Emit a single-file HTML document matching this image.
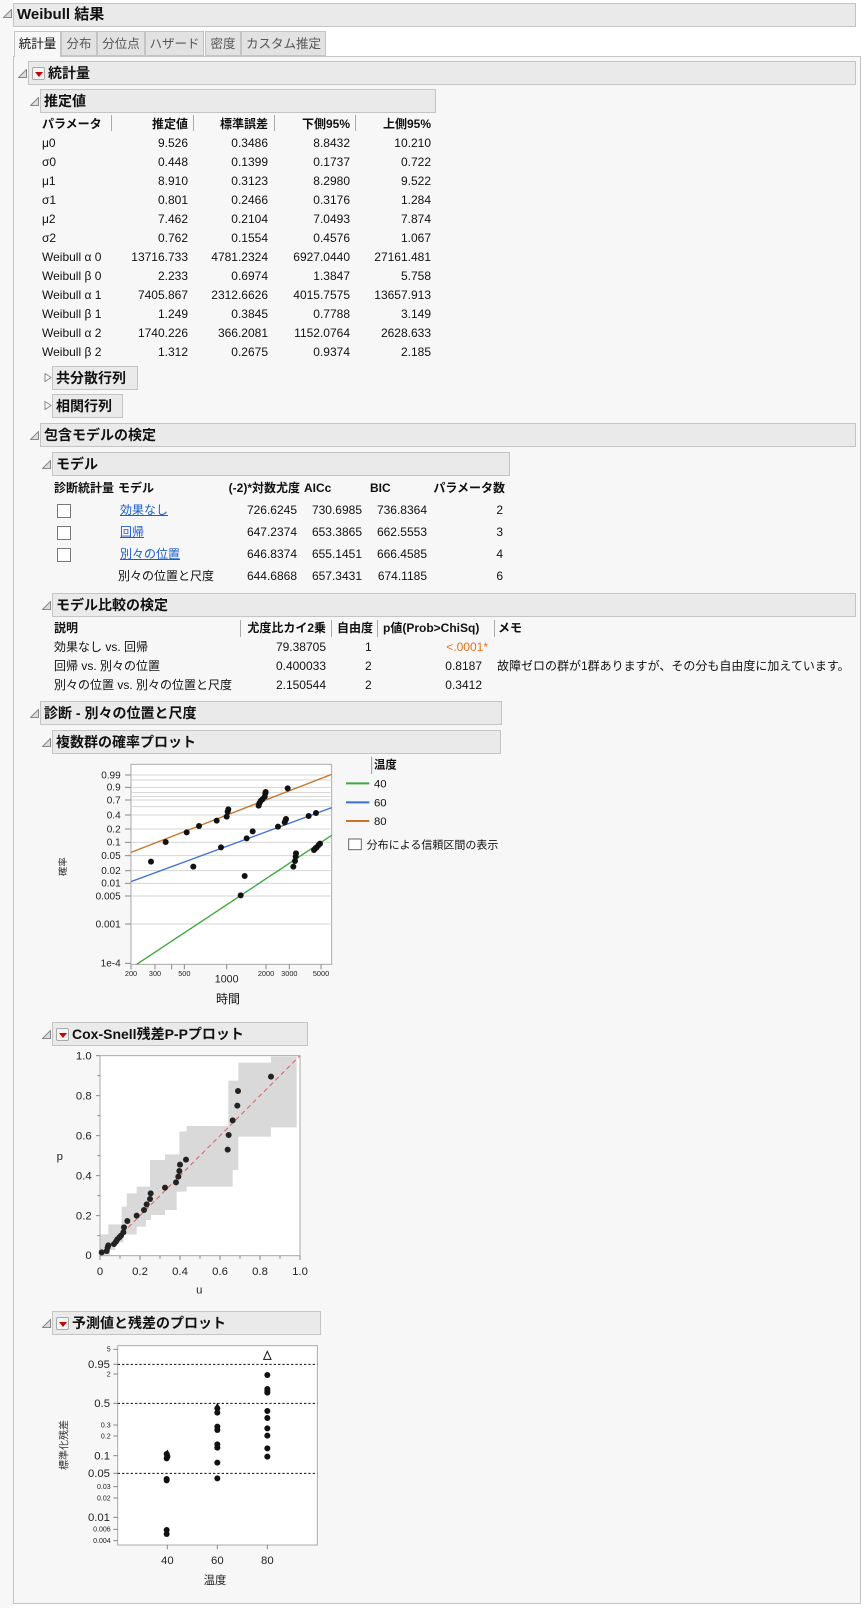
<!DOCTYPE html>
<html><head><meta charset="utf-8">
<style>
*{margin:0;padding:0;box-sizing:border-box}
body{width:866px;height:1608px;background:#fff;font-family:"Liberation Sans","Noto Sans CJK JP",sans-serif;font-size:12px;color:#111;position:relative;overflow:hidden}
.a{position:absolute;white-space:nowrap}
.h{position:absolute;background:#eaeaea;border:1px solid #c4c4c4;font-weight:bold;font-size:14px;line-height:22px;padding-left:3px;height:24px}
.r{position:absolute;white-space:nowrap;text-align:right;width:120px}
.tri{position:absolute;width:9px;height:9px}
.dd{display:inline-block;width:13px;height:13px;border:1px solid #aaa;background:#f4f4f4;border-radius:2px;vertical-align:-2px;margin-right:3px;position:relative}
.dd:after{content:"";position:absolute;left:2px;top:4px;border-left:4px solid transparent;border-right:4px solid transparent;border-top:5px solid #c00}
.tab{position:absolute;top:31px;height:25px;border:1px solid #c4c4c4;background:#e2e2e2;color:#555;font-size:12.5px;line-height:24px;text-align:center}
.sep{position:absolute;width:1px;background:#aaa}
.cb{position:absolute;width:14px;height:14px;border:1px solid #777;background:#fff}
a{color:#1a5fcc;text-decoration:underline}
</style></head><body>
<div class="a" style="left:13px;top:56px;width:848px;height:1548px;background:#f7f7f7;border:1px solid #c4c4c4"></div>
<div class="a" style="left:0;top:0;width:13px;height:1608px;background:#f7f7f7"></div>
<svg class="tri" style="left:3px;top:9px" viewBox="0 0 9 9"><polygon points="0.5,8.5 8.5,0.5 8.5,8.5" fill="#ddd" stroke="#888"/></svg>
<div class="h" style="left:13px;top:3px;width:843px;height:24px;font-size:15px">Weibull 結果</div>

<div class="tab" style="left:14px;width:47px;background:#f7f7f7;color:#111;border-bottom:none;height:26px">統計量</div>
<div class="tab" style="left:61px;width:36px">分布</div>
<div class="tab" style="left:97px;width:48px">分位点</div>
<div class="tab" style="left:145px;width:59px">ハザード</div>
<div class="tab" style="left:205px;width:36px">密度</div>
<div class="tab" style="left:241px;width:85px">カスタム推定</div>

<svg class="tri" style="left:18px;top:69px" viewBox="0 0 9 9"><polygon points="0.5,8.5 8.5,0.5 8.5,8.5" fill="#ddd" stroke="#888"/></svg>
<div class="h" style="left:28px;top:61px;width:828px"><span class="dd"></span>統計量</div>
<svg class="tri" style="left:30px;top:97px" viewBox="0 0 9 9"><polygon points="0.5,8.5 8.5,0.5 8.5,8.5" fill="#ddd" stroke="#888"/></svg>
<div class="h" style="left:40px;top:89px;width:396px">推定値</div>

<div style="position:absolute;left:0;top:115px;line-height:19px">
<div class="a" style="left:42px;font-weight:bold">パラメータ</div>
<div class="r" style="left:68px;font-weight:bold">推定値</div>
<div class="r" style="left:148px;font-weight:bold">標準誤差</div>
<div class="r" style="left:230px;font-weight:bold">下側95%</div>
<div class="r" style="left:311px;font-weight:bold">上側95%</div>
</div>
<div class="sep" style="left:111px;top:115px;height:16px"></div>
<div class="sep" style="left:193px;top:115px;height:16px"></div>
<div class="sep" style="left:274px;top:115px;height:16px"></div>
<div class="sep" style="left:355px;top:115px;height:16px"></div>

<div style="position:absolute;left:0;top:134px;line-height:19px">
<div class="a" style="left:42px;top:0">μ0</div><div class="r" style="left:68px;top:0">9.526</div><div class="r" style="left:148px;top:0">0.3486</div><div class="r" style="left:230px;top:0">8.8432</div><div class="r" style="left:311px;top:0">10.210</div>
<div class="a" style="left:42px;top:19px">σ0</div><div class="r" style="left:68px;top:19px">0.448</div><div class="r" style="left:148px;top:19px">0.1399</div><div class="r" style="left:230px;top:19px">0.1737</div><div class="r" style="left:311px;top:19px">0.722</div>
<div class="a" style="left:42px;top:38px">μ1</div><div class="r" style="left:68px;top:38px">8.910</div><div class="r" style="left:148px;top:38px">0.3123</div><div class="r" style="left:230px;top:38px">8.2980</div><div class="r" style="left:311px;top:38px">9.522</div>
<div class="a" style="left:42px;top:57px">σ1</div><div class="r" style="left:68px;top:57px">0.801</div><div class="r" style="left:148px;top:57px">0.2466</div><div class="r" style="left:230px;top:57px">0.3176</div><div class="r" style="left:311px;top:57px">1.284</div>
<div class="a" style="left:42px;top:76px">μ2</div><div class="r" style="left:68px;top:76px">7.462</div><div class="r" style="left:148px;top:76px">0.2104</div><div class="r" style="left:230px;top:76px">7.0493</div><div class="r" style="left:311px;top:76px">7.874</div>
<div class="a" style="left:42px;top:95px">σ2</div><div class="r" style="left:68px;top:95px">0.762</div><div class="r" style="left:148px;top:95px">0.1554</div><div class="r" style="left:230px;top:95px">0.4576</div><div class="r" style="left:311px;top:95px">1.067</div>
<div class="a" style="left:42px;top:114px">Weibull α 0</div><div class="r" style="left:68px;top:114px">13716.733</div><div class="r" style="left:148px;top:114px">4781.2324</div><div class="r" style="left:230px;top:114px">6927.0440</div><div class="r" style="left:311px;top:114px">27161.481</div>
<div class="a" style="left:42px;top:133px">Weibull β 0</div><div class="r" style="left:68px;top:133px">2.233</div><div class="r" style="left:148px;top:133px">0.6974</div><div class="r" style="left:230px;top:133px">1.3847</div><div class="r" style="left:311px;top:133px">5.758</div>
<div class="a" style="left:42px;top:152px">Weibull α 1</div><div class="r" style="left:68px;top:152px">7405.867</div><div class="r" style="left:148px;top:152px">2312.6626</div><div class="r" style="left:230px;top:152px">4015.7575</div><div class="r" style="left:311px;top:152px">13657.913</div>
<div class="a" style="left:42px;top:171px">Weibull β 1</div><div class="r" style="left:68px;top:171px">1.249</div><div class="r" style="left:148px;top:171px">0.3845</div><div class="r" style="left:230px;top:171px">0.7788</div><div class="r" style="left:311px;top:171px">3.149</div>
<div class="a" style="left:42px;top:190px">Weibull α 2</div><div class="r" style="left:68px;top:190px">1740.226</div><div class="r" style="left:148px;top:190px">366.2081</div><div class="r" style="left:230px;top:190px">1152.0764</div><div class="r" style="left:311px;top:190px">2628.633</div>
<div class="a" style="left:42px;top:209px">Weibull β 2</div><div class="r" style="left:68px;top:209px">1.312</div><div class="r" style="left:148px;top:209px">0.2675</div><div class="r" style="left:230px;top:209px">0.9374</div><div class="r" style="left:311px;top:209px">2.185</div>
</div>

<svg class="tri" style="left:44px;top:373px" viewBox="0 0 9 9"><polygon points="1,0.5 7,4.5 1,8.5" fill="#fff" stroke="#888"/></svg>
<div class="h" style="left:52px;top:366px;width:86px">共分散行列</div>
<svg class="tri" style="left:44px;top:401px" viewBox="0 0 9 9"><polygon points="1,0.5 7,4.5 1,8.5" fill="#fff" stroke="#888"/></svg>
<div class="h" style="left:52px;top:394px;width:71px">相関行列</div>

<svg class="tri" style="left:30px;top:431px" viewBox="0 0 9 9"><polygon points="0.5,8.5 8.5,0.5 8.5,8.5" fill="#ddd" stroke="#888"/></svg>
<div class="h" style="left:40px;top:423px;width:816px">包含モデルの検定</div>
<svg class="tri" style="left:42px;top:460px" viewBox="0 0 9 9"><polygon points="0.5,8.5 8.5,0.5 8.5,8.5" fill="#ddd" stroke="#888"/></svg>
<div class="h" style="left:52px;top:452px;width:458px">モデル</div>

<div style="position:absolute;left:0;top:479px;line-height:19px;font-weight:bold">
<div class="a" style="left:54px">診断統計量</div>
<div class="a" style="left:118px">モデル</div>
<div class="r" style="left:180px">(-2)*対数尤度</div>
<div class="a" style="left:304px">AICc</div>
<div class="a" style="left:370px">BIC</div>
<div class="r" style="left:385px">パラメータ数</div>
</div>
<div style="position:absolute;left:0;top:501px;line-height:19px">
<div class="cb" style="left:57px;top:3px"></div><div class="a" style="left:120px;top:0"><a>効果なし</a></div><div class="r" style="left:177px;top:0">726.6245</div><div class="r" style="left:242px;top:0">730.6985</div><div class="r" style="left:307px;top:0">736.8364</div><div class="r" style="left:383px;top:0">2</div>
<div class="cb" style="left:57px;top:25px"></div><div class="a" style="left:120px;top:22px"><a>回帰</a></div><div class="r" style="left:177px;top:22px">647.2374</div><div class="r" style="left:242px;top:22px">653.3865</div><div class="r" style="left:307px;top:22px">662.5553</div><div class="r" style="left:383px;top:22px">3</div>
<div class="cb" style="left:57px;top:47px"></div><div class="a" style="left:120px;top:44px"><a>別々の位置</a></div><div class="r" style="left:177px;top:44px">646.8374</div><div class="r" style="left:242px;top:44px">655.1451</div><div class="r" style="left:307px;top:44px">666.4585</div><div class="r" style="left:383px;top:44px">4</div>
<div class="a" style="left:118px;top:66px">別々の位置と尺度</div><div class="r" style="left:177px;top:66px">644.6868</div><div class="r" style="left:242px;top:66px">657.3431</div><div class="r" style="left:307px;top:66px">674.1185</div><div class="r" style="left:383px;top:66px">6</div>
</div>

<svg class="tri" style="left:42px;top:601px" viewBox="0 0 9 9"><polygon points="0.5,8.5 8.5,0.5 8.5,8.5" fill="#ddd" stroke="#888"/></svg>
<div class="h" style="left:52px;top:593px;width:804px">モデル比較の検定</div>
<div style="position:absolute;left:0;top:619px;line-height:19px;font-weight:bold">
<div class="a" style="left:54px">説明</div>
<div class="r" style="left:206px">尤度比カイ2乗</div>
<div class="a" style="left:337px">自由度</div>
<div class="a" style="left:383px">p値(Prob&gt;ChiSq)</div>
<div class="a" style="left:498px">メモ</div>
</div>
<div class="sep" style="left:240px;top:620px;height:17px"></div>
<div class="sep" style="left:331px;top:620px;height:17px"></div>
<div class="sep" style="left:377px;top:620px;height:17px"></div>
<div class="sep" style="left:494px;top:620px;height:17px"></div>
<div style="position:absolute;left:0;top:638px;line-height:19px">
<div class="a" style="left:54px;top:0">効果なし vs. 回帰</div><div class="r" style="left:206px;top:0">79.38705</div><div class="a" style="left:365px;top:0">1</div><div class="r" style="left:368px;top:0;color:#e8711e">&lt;.0001*</div>
<div class="a" style="left:54px;top:19px">回帰 vs. 別々の位置</div><div class="r" style="left:206px;top:19px">0.400033</div><div class="a" style="left:365px;top:19px">2</div><div class="r" style="left:362px;top:19px">0.8187</div><div class="a" style="left:497px;top:19px">故障ゼロの群が1群ありますが、その分も自由度に加えています。</div>
<div class="a" style="left:54px;top:38px">別々の位置 vs. 別々の位置と尺度</div><div class="r" style="left:206px;top:38px">2.150544</div><div class="a" style="left:365px;top:38px">2</div><div class="r" style="left:362px;top:38px">0.3412</div>
</div>

<svg class="tri" style="left:30px;top:709px" viewBox="0 0 9 9"><polygon points="0.5,8.5 8.5,0.5 8.5,8.5" fill="#ddd" stroke="#888"/></svg>
<div class="h" style="left:40px;top:701px;width:462px">診断 - 別々の位置と尺度</div>
<svg class="tri" style="left:42px;top:738px" viewBox="0 0 9 9"><polygon points="0.5,8.5 8.5,0.5 8.5,8.5" fill="#ddd" stroke="#888"/></svg>
<div class="h" style="left:52px;top:730px;width:449px">複数群の確率プロット</div>

<svg style="position:absolute;left:30px;top:730px" width="470" height="260" viewBox="0 0 1410 780" font-family="Liberation Sans,Noto Sans CJK JP,sans-serif">
<rect x="303" y="103" width="602" height="600" fill="#fff" stroke="#aaa" stroke-width="3"/>
<g stroke="#d4d4d4" stroke-width="3">
<line x1="303" x2="905" y1="135" y2="135"/><line x1="303" x2="905" y1="150" y2="150"/><line x1="303" x2="905" y1="172" y2="172"/><line x1="303" x2="905" y1="188" y2="188"/><line x1="303" x2="905" y1="200" y2="200"/><line x1="303" x2="905" y1="210" y2="210"/><line x1="303" x2="905" y1="230" y2="230"/><line x1="303" x2="905" y1="255" y2="255"/><line x1="303" x2="905" y1="297" y2="297"/><line x1="303" x2="905" y1="337" y2="337"/><line x1="303" x2="905" y1="377" y2="377"/><line x1="303" x2="905" y1="422" y2="422"/><line x1="303" x2="905" y1="460" y2="460"/><line x1="303" x2="905" y1="498" y2="498"/><line x1="303" x2="905" y1="582" y2="582"/>
</g>
<g stroke="#888" stroke-width="3">
<line x1="285" x2="303" y1="135" y2="135"/><line x1="285" x2="303" y1="172" y2="172"/><line x1="285" x2="303" y1="210" y2="210"/><line x1="285" x2="303" y1="255" y2="255"/><line x1="285" x2="303" y1="297" y2="297"/><line x1="285" x2="303" y1="337" y2="337"/><line x1="285" x2="303" y1="377" y2="377"/><line x1="285" x2="303" y1="422" y2="422"/><line x1="285" x2="303" y1="460" y2="460"/><line x1="285" x2="303" y1="498" y2="498"/><line x1="285" x2="303" y1="582" y2="582"/><line x1="285" x2="303" y1="700" y2="700"/>
<line x1="303" x2="303" y1="703" y2="718"/><line x1="375" x2="375" y1="703" y2="718"/><line x1="425" x2="425" y1="703" y2="718"/><line x1="463" x2="463" y1="703" y2="718"/><line x1="590" x2="590" y1="703" y2="718"/><line x1="708" x2="708" y1="703" y2="718"/><line x1="778" x2="778" y1="703" y2="718"/><line x1="873" x2="873" y1="703" y2="718"/>
</g>
<g font-size="30" text-anchor="end" fill="#222">
<text x="272" y="145">0.99</text><text x="272" y="182">0.9</text><text x="272" y="220">0.7</text><text x="272" y="265">0.4</text><text x="272" y="307">0.2</text><text x="272" y="347">0.1</text><text x="272" y="387">0.05</text><text x="272" y="432">0.02</text><text x="272" y="470">0.01</text><text x="272" y="508">0.005</text><text x="272" y="592">0.001</text><text x="272" y="710">1e-4</text>
</g>
<g font-size="22" text-anchor="middle" fill="#222">
<text x="303" y="738">200</text><text x="375" y="738">300</text><text x="463" y="738">500</text><text x="708" y="738">2000</text><text x="778" y="738">3000</text><text x="873" y="738">5000</text>
</g>
<text x="590" y="758" font-size="32" text-anchor="middle" fill="#222">1000</text>
<text transform="translate(108,410) rotate(-90)" font-size="28" text-anchor="middle" fill="#333">確率</text>
<line x1="303" y1="367" x2="905" y2="133" stroke="#c8742a" stroke-width="4"/>
<line x1="303" y1="455" x2="905" y2="233" stroke="#3a6fd8" stroke-width="4"/>
<line x1="320" y1="703" x2="905" y2="316" stroke="#3aaa3a" stroke-width="4"/>
<g fill="#111">
<circle cx="363" cy="395" r="9"/><circle cx="407" cy="336" r="9"/><circle cx="470" cy="307" r="9"/><circle cx="507" cy="288" r="9"/><circle cx="560" cy="272" r="9"/><circle cx="590" cy="260" r="9"/><circle cx="593" cy="245" r="9"/><circle cx="595" cy="238" r="9"/><circle cx="686" cy="227" r="9"/><circle cx="688" cy="220" r="9"/><circle cx="692" cy="213" r="9"/><circle cx="697" cy="208" r="9"/><circle cx="704" cy="200" r="9"/><circle cx="706" cy="190" r="9"/><circle cx="707" cy="186" r="9"/><circle cx="773" cy="175" r="9"/>
<circle cx="490" cy="410" r="9"/><circle cx="573" cy="352" r="9"/><circle cx="650" cy="325" r="9"/><circle cx="668" cy="304" r="9"/><circle cx="744" cy="290" r="9"/><circle cx="764" cy="277" r="9"/><circle cx="767" cy="270" r="9"/><circle cx="768" cy="267" r="9"/><circle cx="836" cy="258" r="9"/><circle cx="858" cy="249" r="9"/>
<circle cx="644" cy="438" r="9"/><circle cx="632" cy="496" r="9"/><circle cx="790" cy="410" r="9"/><circle cx="795" cy="393" r="9"/><circle cx="797" cy="380" r="9"/><circle cx="798" cy="370" r="9"/><circle cx="852" cy="360" r="9"/><circle cx="856" cy="355" r="9"/><circle cx="860" cy="352" r="9"/><circle cx="866" cy="345" r="9"/><circle cx="870" cy="341" r="9"/>
</g>
<line x1="1025" y1="80" x2="1025" y2="132" stroke="#999" stroke-width="3"/>
<text x="1032" y="115" font-size="34" font-weight="bold" fill="#111">温度</text>
<line x1="948" x2="1018" y1="160" y2="160" stroke="#3aaa3a" stroke-width="6"/>
<line x1="948" x2="1018" y1="217" y2="217" stroke="#3a6fd8" stroke-width="6"/>
<line x1="948" x2="1018" y1="273" y2="273" stroke="#c8742a" stroke-width="6"/>
<g font-size="34" fill="#111"><text x="1032" y="172">40</text><text x="1032" y="229">60</text><text x="1032" y="285">80</text></g>
<rect x="956" y="327" width="38" height="32" fill="#fff" stroke="#666" stroke-width="3"/>
<text x="1010" y="355" font-size="33" fill="#111">分布による信頼区間の表示</text>
</svg>
<div class="a" style="left:216px;top:990px">時間</div>

<svg class="tri" style="left:42px;top:1030px" viewBox="0 0 9 9"><polygon points="0.5,8.5 8.5,0.5 8.5,8.5" fill="#ddd" stroke="#888"/></svg>
<div class="h" style="left:52px;top:1022px;width:256px"><span class="dd"></span>Cox-Snell残差P-Pプロット</div>

<svg style="position:absolute;left:40px;top:990px" width="270" height="320" viewBox="0 0 810 960" font-family="Liberation Sans,sans-serif">
<rect x="180" y="197" width="600" height="600" fill="#fff" stroke="#aaa" stroke-width="3"/>
<polygon fill="#d9d9d9" points="181,733 205,733 205,703 245,703 245,650 260,650 260,610 290,610 290,590 330,590 330,510 375,510 375,493 418,493 418,425 440,425 440,408 565,408 565,272 595,272 595,218 693,218 693,200 770,200 770,412 693,412 693,440 595,440 595,540 578,540 578,590 440,590 440,605 410,605 410,660 375,660 375,675 333,675 333,690 318,690 318,710 290,710 290,733 250,733 250,757 225,757 225,780 210,780 210,795 181,795"/>
<line x1="180" y1="797" x2="780" y2="197" stroke="#e85a5a" stroke-width="3" stroke-dasharray="14,10"/>
<g fill="#222">
<circle cx="185" cy="787" r="9"/><circle cx="200" cy="783" r="9"/><circle cx="203" cy="772" r="9"/><circle cx="205" cy="766" r="9"/><circle cx="222" cy="762" r="9"/><circle cx="228" cy="755" r="9"/><circle cx="232" cy="748" r="9"/><circle cx="238" cy="742" r="9"/><circle cx="243" cy="737" r="9"/><circle cx="250" cy="727" r="9"/><circle cx="252" cy="712" r="9"/><circle cx="262" cy="693" r="9"/><circle cx="290" cy="677" r="9"/><circle cx="312" cy="660" r="9"/><circle cx="320" cy="643" r="9"/><circle cx="330" cy="627" r="9"/><circle cx="332" cy="610" r="9"/><circle cx="375" cy="593" r="9"/><circle cx="408" cy="577" r="9"/><circle cx="415" cy="560" r="9"/><circle cx="418" cy="543" r="9"/><circle cx="420" cy="524" r="9"/><circle cx="438" cy="509" r="9"/><circle cx="563" cy="479" r="9"/><circle cx="566" cy="435" r="9"/><circle cx="578" cy="391" r="9"/><circle cx="592" cy="347" r="9"/><circle cx="594" cy="303" r="9"/><circle cx="693" cy="260" r="9"/>
</g>
<g stroke="#888" stroke-width="3">
<line x1="168" x2="180" y1="197" y2="197"/><line x1="172" x2="180" y1="257" y2="257"/><line x1="168" x2="180" y1="317" y2="317"/><line x1="172" x2="180" y1="377" y2="377"/><line x1="168" x2="180" y1="437" y2="437"/><line x1="172" x2="180" y1="497" y2="497"/><line x1="168" x2="180" y1="557" y2="557"/><line x1="172" x2="180" y1="617" y2="617"/><line x1="168" x2="180" y1="677" y2="677"/><line x1="172" x2="180" y1="737" y2="737"/>
<line x1="180" x2="180" y1="797" y2="810"/><line x1="240" x2="240" y1="797" y2="806"/><line x1="300" x2="300" y1="797" y2="810"/><line x1="360" x2="360" y1="797" y2="806"/><line x1="420" x2="420" y1="797" y2="810"/><line x1="480" x2="480" y1="797" y2="806"/><line x1="540" x2="540" y1="797" y2="810"/><line x1="600" x2="600" y1="797" y2="806"/><line x1="660" x2="660" y1="797" y2="810"/><line x1="720" x2="720" y1="797" y2="806"/><line x1="780" x2="780" y1="797" y2="810"/>
</g>
<g font-size="34" text-anchor="end" fill="#222">
<text x="155" y="209">1.0</text><text x="155" y="329">0.8</text><text x="155" y="449">0.6</text><text x="155" y="569">0.4</text><text x="155" y="689">0.2</text><text x="155" y="807">0</text>
</g>
<g font-size="34" text-anchor="middle" fill="#222">
<text x="180" y="855">0</text><text x="300" y="855">0.2</text><text x="420" y="855">0.4</text><text x="540" y="855">0.6</text><text x="660" y="855">0.8</text><text x="780" y="855">1.0</text>
<text x="478" y="910">u</text>
</g>
<text x="50" y="510" font-size="34" fill="#222">p</text>
</svg>

<svg class="tri" style="left:42px;top:1319px" viewBox="0 0 9 9"><polygon points="0.5,8.5 8.5,0.5 8.5,8.5" fill="#ddd" stroke="#888"/></svg>
<div class="h" style="left:52px;top:1311px;width:269px"><span class="dd"></span>予測値と残差のプロット</div>

<svg style="position:absolute;left:30px;top:1280px" width="300" height="328" viewBox="0 0 900 984" font-family="Liberation Sans,Noto Sans CJK JP,sans-serif">
<rect x="263" y="197" width="599" height="598" fill="#fff" stroke="#aaa" stroke-width="3"/>
<g stroke="#111" stroke-width="3" stroke-dasharray="7,6">
<line x1="263" x2="862" y1="253" y2="253"/><line x1="263" x2="862" y1="370" y2="370"/><line x1="263" x2="862" y1="580" y2="580"/>
</g>
<g stroke="#888" stroke-width="3">
<line x1="250" x2="263" y1="208" y2="208"/><line x1="250" x2="263" y1="253" y2="253"/><line x1="250" x2="263" y1="282" y2="282"/><line x1="250" x2="263" y1="370" y2="370"/><line x1="250" x2="263" y1="435" y2="435"/><line x1="250" x2="263" y1="468" y2="468"/><line x1="250" x2="263" y1="527" y2="527"/><line x1="250" x2="263" y1="580" y2="580"/><line x1="250" x2="263" y1="620" y2="620"/><line x1="250" x2="263" y1="654" y2="654"/><line x1="250" x2="263" y1="712" y2="712"/><line x1="250" x2="263" y1="748" y2="748"/><line x1="250" x2="263" y1="782" y2="782"/>
<line x1="412" x2="412" y1="795" y2="808"/><line x1="562" x2="562" y1="795" y2="808"/><line x1="712" x2="712" y1="795" y2="808"/>
</g>
<g text-anchor="end" fill="#222">
<text x="240" y="264" font-size="34">0.95</text><text x="240" y="381" font-size="34">0.5</text><text x="240" y="538" font-size="34">0.1</text><text x="240" y="591" font-size="34">0.05</text><text x="240" y="723" font-size="34">0.01</text>
<g font-size="21"><text x="242" y="215">5</text><text x="242" y="289">2</text><text x="242" y="442">0.3</text><text x="242" y="475">0.2</text><text x="242" y="627">0.03</text><text x="242" y="661">0.02</text><text x="242" y="755">0.006</text><text x="242" y="789">0.004</text></g>
</g>
<g font-size="34" text-anchor="middle" fill="#222"><text x="412" y="852">40</text><text x="562" y="852">60</text><text x="712" y="852">80</text><text x="555" y="912">温度</text></g>
<text transform="translate(112,495) rotate(-90)" font-size="30" text-anchor="middle" fill="#333">標準化残差</text>
<g fill="#111">
<polygon points="412,508 403,526 421,526"/><polygon points="562,368 553,386 571,386"/>
<circle cx="410" cy="522" r="9"/><circle cx="412" cy="530" r="9"/><circle cx="410" cy="535" r="9"/><circle cx="410" cy="597" r="9"/><circle cx="410" cy="601" r="9"/><circle cx="410" cy="750" r="9"/><circle cx="410" cy="762" r="9"/>
<circle cx="562" cy="385" r="9"/><circle cx="562" cy="398" r="9"/><circle cx="562" cy="440" r="9"/><circle cx="562" cy="450" r="9"/><circle cx="562" cy="493" r="9"/><circle cx="562" cy="503" r="9"/><circle cx="562" cy="548" r="9"/><circle cx="562" cy="595" r="9"/>
<circle cx="712" cy="285" r="9"/><circle cx="712" cy="327" r="9"/><circle cx="712" cy="333" r="9"/><circle cx="712" cy="338" r="9"/><circle cx="712" cy="393" r="9"/><circle cx="712" cy="414" r="9"/><circle cx="712" cy="445" r="9"/><circle cx="712" cy="467" r="9"/><circle cx="712" cy="505" r="9"/><circle cx="712" cy="530" r="9"/>
</g>
<polygon points="712,214 701,238 723,238" fill="#fff" stroke="#111" stroke-width="3"/>
</svg>
</body></html>
